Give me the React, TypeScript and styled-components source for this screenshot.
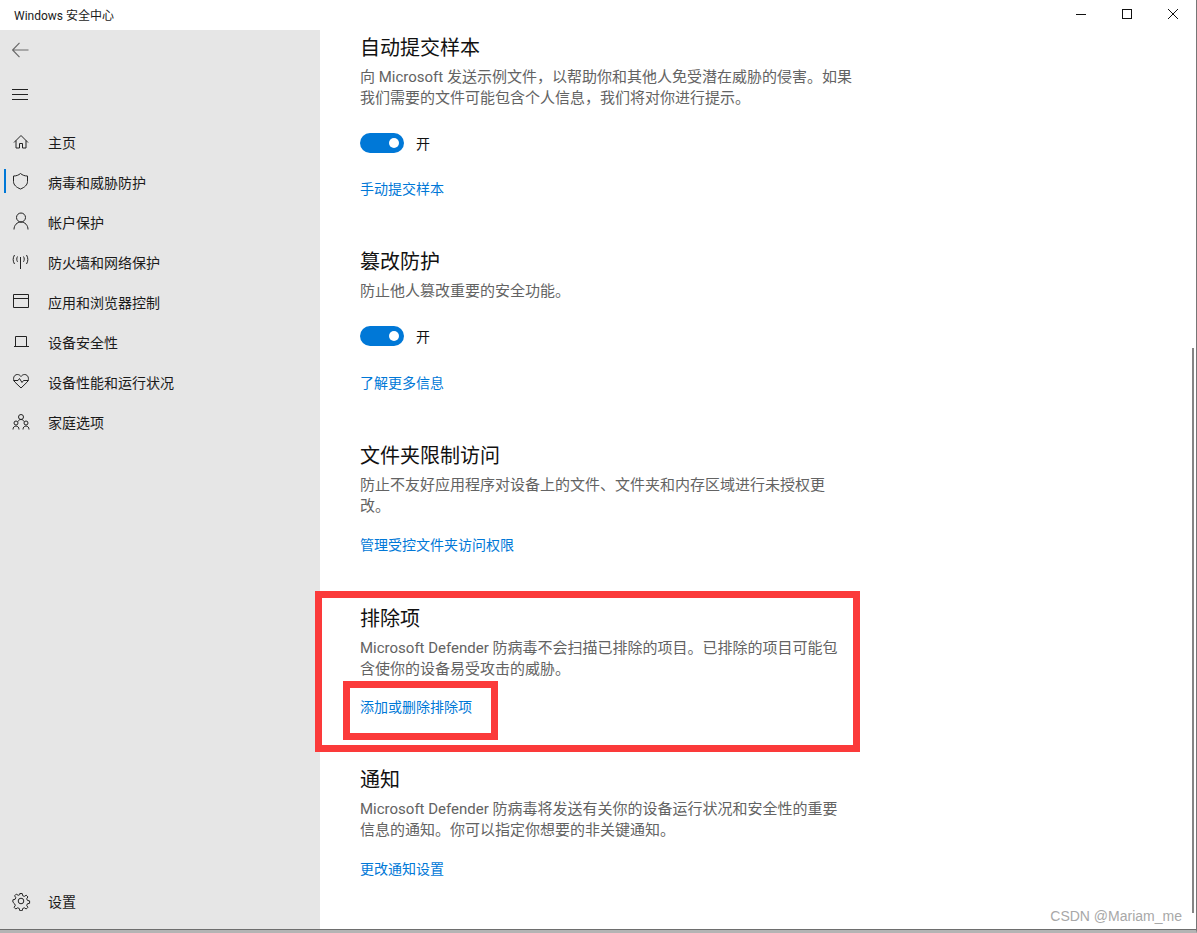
import React from "react";
import styled, { createGlobalStyle } from "styled-components";

const GlobalStyle = createGlobalStyle`
  html, body {
    margin: 0;
    padding: 0;
    background: #fff;
    overflow: hidden;
  }
  * {
    box-sizing: border-box;
  }
`;

const Window = styled.div`
  position: relative;
  width: 1197px;
  height: 933px;
  display: flex;
  flex-direction: column;
  overflow: hidden;
  background: #fff;
  font-family: Roboto, "Noto Sans CJK SC", sans-serif;
  border-right: 1px solid #767676;
  border-bottom: 3px solid #b4b4b4;
`;

const TitleBar = styled.header`
  height: 30px;
  flex: none;
  display: flex;
  align-items: center;
  justify-content: space-between;
  padding: 0 0 2px 14px;
  color: #1a1a1a;
  font-size: 12px;
`;

const Controls = styled.div`
  display: flex;
  height: 28px;
`;

const ControlButton = styled.button`
  width: 46px;
  height: 28px;
  padding: 0;
  border: 0;
  background: none;
  display: flex;
  align-items: center;
  justify-content: center;
  svg {
    display: block;
  }
`;

const Body = styled.div`
  flex: 1;
  min-height: 0;
  display: flex;
  border-bottom: 1px solid #6e6e6e;
`;

const Sidebar = styled.aside`
  width: 320px;
  flex: none;
  background: #e6e6e6;
  display: flex;
  flex-direction: column;
`;

const IconButton = styled.div`
  height: 40px;
  flex: none;
  padding-left: 12px;
  display: flex;
  align-items: center;
  color: #222;
  & + & {
    margin-top: 4px;
  }
  svg {
    display: block;
  }
`;

const NavList = styled.nav`
  margin-top: 8px;
  display: flex;
  flex-direction: column;
`;

const NavItem = styled.div<{ $active?: boolean }>`
  position: relative;
  height: 40px;
  padding-left: 12px;
  display: flex;
  align-items: center;
  gap: 16px;
  color: #1a1a1a;
  font-size: 14px;
  svg {
    display: block;
    flex: none;
  }
  ${(p) =>
    p.$active &&
    `
    &::before {
      content: "";
      position: absolute;
      left: 4px;
      top: 7px;
      width: 2px;
      height: 24px;
      background: #0078d7;
    }
  `}
`;

const SettingsItem = styled(NavItem)`
  margin-top: auto;
  margin-bottom: 8px;
`;

const Main = styled.main`
  position: relative;
  flex: 1;
  padding: 3px 0 0 40px;
  overflow: hidden;
`;

const Section = styled.section<{ $gap: number }>`
  width: 492px;
  margin-bottom: ${(p) => p.$gap}px;
`;

const Heading = styled.h2`
  margin: 0;
  height: 30px;
  line-height: 30px;
  font-size: 20px;
  font-weight: 400;
  color: #111;
  white-space: nowrap;
`;

const Description = styled.p`
  margin: 4px 0 0;
  font-size: 15px;
  line-height: 21px;
  color: #636363;
`;

const ToggleRow = styled.div`
  margin-top: 24px;
  height: 20px;
  display: flex;
  align-items: center;
  gap: 12px;
  font-size: 14px;
  color: #111;
`;

const ToggleTrack = styled.span`
  position: relative;
  width: 44px;
  height: 20px;
  border-radius: 10px;
  background: #0078d7;
  &::after {
    content: "";
    position: absolute;
    right: 5px;
    top: 5px;
    width: 10px;
    height: 10px;
    border-radius: 50%;
    background: #fff;
  }
`;

const SectionLink = styled.a<{ $top: number }>`
  display: block;
  margin-top: ${(p) => p.$top}px;
  height: 21px;
  line-height: 21px;
  font-size: 14px;
  color: #0078d7;
  white-space: nowrap;
`;

const ScrollThumb = styled.div`
  position: absolute;
  right: 2px;
  top: 318px;
  width: 2px;
  height: 565px;
  background: #858585;
`;

const Highlight = styled.div`
  position: absolute;
  border: 7px solid #fb3a3a;
  pointer-events: none;
`;

const OuterHighlight = styled(Highlight)`
  left: 315px;
  top: 591px;
  width: 545px;
  height: 161px;
`;

const InnerHighlight = styled(Highlight)`
  left: 343px;
  top: 681px;
  width: 155px;
  height: 59px;
`;

const Watermark = styled.div`
  position: absolute;
  right: 14px;
  bottom: 6px;
  font-family: "Liberation Sans", sans-serif;
  font-size: 14px;
  color: #a8a8a8;
`;

const S = { fill: "none", stroke: "#222", strokeWidth: 1 } as const;

const Glyph = ({ children }: { children: React.ReactNode }) => (
  <svg width="20" height="20" viewBox="0 0 20 20" {...S}>
    {children}
  </svg>
);

const icons = {
  back: (
    <svg width="20" height="20" viewBox="0 0 20 20" fill="none" stroke="#6a6a6a" strokeWidth="1.2">
      <path d="M0.5 10H16.5M7.5 2.800L0.600 10l6.900 7.200" />
    </svg>
  ),
  menu: (
    <svg width="20" height="20" viewBox="0 0 20 20" {...S}>
      <path d="M0 5.500H16M0 10.500H16M0 15.500H16" />
    </svg>
  ),
  home: (
    <Glyph>
      <path d="M2 10.500L9 3.500l7 7M4 8.500v7.500h3.500v-4.500h3v4.500H14V8.500" />
    </Glyph>
  ),
  shield: (
    <Glyph>
      <path d="M8.500 1.500c2 1.700 4.200 2.500 7 2.500v5.500c0 3.500-3 5.900-7 7.500-4-1.600-7-4-7-7.500V4c2.800 0 5-.8 7-2.500z" />
    </Glyph>
  ),
  user: (
    <Glyph>
      <circle cx="9" cy="5.500" r="4.500" />
      <path d="M2 17.500c0-4.200 3-7.500 7-7.500s7 3.300 7 7.500" />
    </Glyph>
  ),
  signal: (
    <Glyph>
      <path d="M8.500 5v12M5.500 4.500c-1 1.800-1 3.500 0 5.300M11.500 4.500c1 1.800 1 3.500 0 5.300M2.500 3c-1.800 3-1.800 6 0 9M14.500 3c1.800 3 1.800 6 0 9" />
    </Glyph>
  ),
  browser: (
    <Glyph>
      <path d="M1.500 2.500h15v13h-15zM1.500 6.500h15" />
    </Glyph>
  ),
  laptop: (
    <Glyph>
      <path d="M3.500 14.500v-10h11v10M2 14.500h15" />
    </Glyph>
  ),
  health: (
    <Glyph>
      <path d="M9 16L2.800 10C.2 7 2 2.500 5.300 2.500c1.700 0 2.900.9 3.700 2 .8-1.100 2-2 3.700-2 3.300 0 5.100 4.500 2.500 7.500z" />
      <path d="M1.500 8.500h4.500l1.500-2 2.500 4 1.500-2h5" />
    </Glyph>
  ),
  family: (
    <Glyph>
      <circle cx="9" cy="5" r="2.500" />
      <circle cx="4" cy="11" r="2" />
      <circle cx="14" cy="11" r="2" />
      <path d="M1 17.500c0-2 1.200-3.500 3-3.500s3 1.500 3 3.500M11 17.500c0-2 1.200-3.500 3-3.500s3 1.500 3 3.500M6 9.500c.5-1.300 1.700-2 3-2s2.500.7 3 2" />
    </Glyph>
  ),
  gear: (
    <Glyph>
      <circle cx="9" cy="10" r="2.800" />
      <path d="M7.800 2.500h2.400l.5 2.200 1.600.7 1.900-1.200 1.700 1.700-1.200 1.900.7 1.600 2.200.5v2.400l-2.200.5-.7 1.600 1.200 1.900-1.700 1.700-1.900-1.200-1.600.7-.5 2.200H7.800l-.5-2.200-1.600-.7-1.900 1.200-1.700-1.700 1.200-1.900-.7-1.600L.9 11.200V8.800l2.200-.5.7-1.600-1.200-1.900 1.700-1.700 1.900 1.200 1.600-.7z" />
    </Glyph>
  ),
};

const navItems = [
  { label: "主页", icon: icons.home },
  { label: "病毒和威胁防护", icon: icons.shield, active: true },
  { label: "帐户保护", icon: icons.user },
  { label: "防火墙和网络保护", icon: icons.signal },
  { label: "应用和浏览器控制", icon: icons.browser },
  { label: "设备安全性", icon: icons.laptop },
  { label: "设备性能和运行状况", icon: icons.health },
  { label: "家庭选项", icon: icons.family },
];

const sections = [
  {
    title: "自动提交样本",
    text: "向 Microsoft 发送示例文件，以帮助你和其他人免受潜在威胁的侵害。如果我们需要的文件可能包含个人信息，我们将对你进行提示。",
    toggle: true,
    link: "手动提交样本",
    linkTop: 26,
    gap: 47,
  },
  {
    title: "篡改防护",
    text: "防止他人篡改重要的安全功能。",
    toggle: true,
    link: "了解更多信息",
    linkTop: 27,
    gap: 47,
  },
  {
    title: "文件夹限制访问",
    text: "防止不友好应用程序对设备上的文件、文件夹和内存区域进行未授权更改。",
    link: "管理受控文件夹访问权限",
    linkTop: 18,
    gap: 48,
  },
  {
    title: "排除项",
    text: "Microsoft Defender 防病毒不会扫描已排除的项目。已排除的项目可能包含使你的设备易受攻击的威胁。",
    link: "添加或删除排除项",
    linkTop: 17,
    gap: 47,
  },
  {
    title: "通知",
    text: "Microsoft Defender 防病毒将发送有关你的设备运行状况和安全性的重要信息的通知。你可以指定你想要的非关键通知。",
    link: "更改通知设置",
    linkTop: 18,
    gap: 0,
  },
];

const App = () => {
  return (
    <Window>
      <GlobalStyle />
      <TitleBar>
        <span>Windows 安全中心</span>
        <Controls>
          <ControlButton aria-label="最小化">
            <svg width="10" height="10" viewBox="0 0 10 10" stroke="#111">
              <path d="M0 5.500H10" />
            </svg>
          </ControlButton>
          <ControlButton aria-label="最大化">
            <svg width="10" height="10" viewBox="0 0 10 10" fill="none" stroke="#111">
              <rect x=".5" y=".5" width="9" height="9" />
            </svg>
          </ControlButton>
          <ControlButton aria-label="关闭">
            <svg width="10" height="10" viewBox="0 0 10 10" stroke="#111">
              <path d="M0 0L10 10M10 0L0 10" />
            </svg>
          </ControlButton>
        </Controls>
      </TitleBar>
      <Body>
        <Sidebar>
          <IconButton>{icons.back}</IconButton>
          <IconButton>{icons.menu}</IconButton>
          <NavList>
            {navItems.map((item) => (
              <NavItem key={item.label} $active={item.active}>
                {item.icon}
                {item.label}
              </NavItem>
            ))}
          </NavList>
          <SettingsItem>
            {icons.gear}
            设置
          </SettingsItem>
        </Sidebar>
        <Main>
          {sections.map((section) => (
            <Section key={section.title} $gap={section.gap}>
              <Heading>{section.title}</Heading>
              <Description>{section.text}</Description>
              {section.toggle && (
                <ToggleRow>
                  <ToggleTrack />开
                </ToggleRow>
              )}
              <SectionLink $top={section.linkTop}>{section.link}</SectionLink>
            </Section>
          ))}
          <ScrollThumb />
        </Main>
      </Body>
      <OuterHighlight />
      <InnerHighlight />
      <Watermark>CSDN @Mariam_me</Watermark>
    </Window>
  );
};

export default App;
